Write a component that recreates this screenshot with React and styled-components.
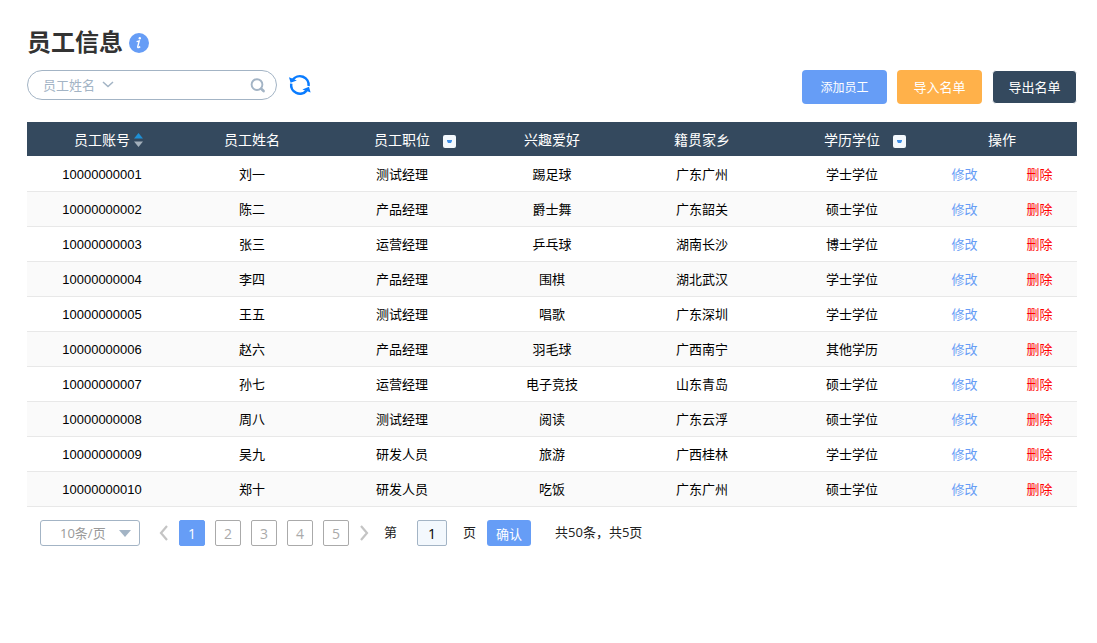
import { useState } from "react";
import styled, { createGlobalStyle } from "styled-components";

const employees = [
  ["10000000001", "刘一", "测试经理", "踢足球", "广东广州", "学士学位"],
  ["10000000002", "陈二", "产品经理", "爵士舞", "广东韶关", "硕士学位"],
  ["10000000003", "张三", "运营经理", "乒乓球", "湖南长沙", "博士学位"],
  ["10000000004", "李四", "产品经理", "围棋", "湖北武汉", "学士学位"],
  ["10000000005", "王五", "测试经理", "唱歌", "广东深圳", "学士学位"],
  ["10000000006", "赵六", "产品经理", "羽毛球", "广西南宁", "其他学历"],
  ["10000000007", "孙七", "运营经理", "电子竞技", "山东青岛", "硕士学位"],
  ["10000000008", "周八", "测试经理", "阅读", "广东云浮", "硕士学位"],
  ["10000000009", "吴九", "研发人员", "旅游", "广西桂林", "学士学位"],
  ["10000000010", "郑十", "研发人员", "吃饭", "广东广州", "硕士学位"],
];

const columns = [
  { label: "员工账号", tool: "sort" },
  { label: "员工姓名" },
  { label: "员工职位", tool: "filter" },
  { label: "兴趣爱好" },
  { label: "籍贯家乡" },
  { label: "学历学位", tool: "filter" },
  { label: "操作" },
];

const pages = [1, 2, 3, 4, 5];

const App = () => {
  const [page, setPage] = useState(1);
  const [target, setTarget] = useState("1");

  return (
    <Container>
      <GlobalStyle />
      <TitleBar>
        <Title>员工信息</Title>
        <InfoIcon />
      </TitleBar>
      <Toolbar>
        <SearchBox>
          <FieldSelect aria-label="搜索字段">
            <option>员工姓名</option>
          </FieldSelect>
          <FieldArrow />
          <SearchInput type="text" aria-label="搜索内容" />
          <IconBtn aria-label="搜索">
            <SearchIcon />
          </IconBtn>
        </SearchBox>
        <IconBtn aria-label="刷新">
          <RefreshIcon />
        </IconBtn>
        <BtnGroup>
          <Btn $color="#669df6" $size={12}>添加员工</Btn>
          <Btn $color="#ffb14a">导入名单</Btn>
          <Btn $color="#34495e" $outlined>导出名单</Btn>
        </BtnGroup>
      </Toolbar>
      <Table>
        <thead>
          <tr>
            {columns.map(({ label, tool }) => (
              <Th key={label}>
                <Heading>
                  <HeadingText>{label}</HeadingText>
                  {tool === "sort" && (
                    <SortBtn aria-label={`${label}排序`}>
                      <SortIcon />
                    </SortBtn>
                  )}
                  {tool === "filter" && (
                    <FilterBtn aria-label={`${label}筛选`}>
                      <FilterIcon />
                    </FilterBtn>
                  )}
                </Heading>
              </Th>
            ))}
          </tr>
        </thead>
        <tbody>
          {employees.map((employee) => (
            <Row key={employee[0]}>
              {employee.map((value, i) => (
                <Td key={i}>{value}</Td>
              ))}
              <Td>
                <Actions>
                  <Action href="#edit" $color="#669df6">修改</Action>
                  <Action href="#delete" $color="#ff0000">删除</Action>
                </Actions>
              </Td>
            </Row>
          ))}
        </tbody>
      </Table>
      <Pagination>
        <SizeBox>
          <SizeSelect aria-label="每页条数">
            <option>10条/页</option>
          </SizeSelect>
          <SizeArrow />
        </SizeBox>
        <Pager>
          <IconBtn aria-label="上一页" onClick={() => setPage(Math.max(1, page - 1))}>
            <Chevron d="M8 2 L2 9 L8 16" />
          </IconBtn>
          {pages.map((n) => (
            <PageBtn key={n} $active={n === page} onClick={() => setPage(n)}>
              {n}
            </PageBtn>
          ))}
          <IconBtn aria-label="下一页" onClick={() => setPage(Math.min(5, page + 1))}>
            <Chevron d="M2 2 L8 9 L2 16" />
          </IconBtn>
        </Pager>
        <Jump>
          <JumpLabel htmlFor="target">第</JumpLabel>
          <PageInput
            id="target"
            type="text"
            value={target}
            onChange={(e) => setTarget(e.target.value)}
          />
          <Caption>页</Caption>
        </Jump>
        <ConfirmBtn onClick={() => setPage(Number(target) || 1)}>确认</ConfirmBtn>
        <Caption>共50条，共5页</Caption>
      </Pagination>
    </Container>
  );
};

const InfoIcon = () => (
  <svg width="20" height="20" viewBox="0 0 20 20" aria-hidden="true">
    <circle cx="10" cy="10" r="10" fill="#669df6" />
    <circle cx="10.8" cy="5.2" r="1.2" fill="#fff" />
    <path
      d="M7.6 8.6 L10.2 8 L8.6 14 Q8.8 15.4 11.2 13.6"
      fill="none"
      stroke="#fff"
      strokeWidth="1.4"
    />
  </svg>
);

const FieldArrow = () => (
  <svg width="12" height="8" viewBox="0 0 12 8" aria-hidden="true">
    <path d="M1 1 L6 5.6 L11 1" fill="none" stroke="#a3b4c5" strokeWidth="1.5" />
  </svg>
);

const SearchIcon = () => (
  <svg width="16" height="16" viewBox="0 0 16 16" aria-hidden="true">
    <circle cx="7" cy="7.6" r="5.4" fill="none" stroke="#a3b4c5" strokeWidth="1.9" />
    <path d="M11.2 11.8 L13.6 14" stroke="#a3b4c5" strokeWidth="2.6" strokeLinecap="round" />
  </svg>
);

const RefreshIcon = () => (
  <svg width="22" height="22" viewBox="0 0 22 22" aria-hidden="true">
    <g fill="none" stroke="#0a7cff" strokeWidth="2.5">
      <path d="M3.6 6 A8.8 8.8 0 0 1 19.6 12" />
      <path d="M2.2 9.6 A8.8 8.8 0 0 0 17.6 16.6" />
    </g>
    <path d="M0 3.2 L2.6 4.2 L7.8 6.6 L1.6 8.8 Z" fill="#0a7cff" />
    <path d="M21.6 18.4 L19 17.4 L13.4 15.4 L20 12.8 Z" fill="#0a7cff" />
  </svg>
);

const SortIcon = () => (
  <svg width="9" height="14" viewBox="0 0 9 14" aria-hidden="true">
    <path d="M4.5 0 L9 5.5 H0 Z" fill="#1e90d6" />
    <path d="M0 8.5 H9 L4.5 14 Z" fill="#a3b0bb" />
  </svg>
);

const FilterIcon = () => (
  <svg width="5" height="3" viewBox="0 0 5 3" aria-hidden="true">
    <path d="M0 0 H5 V1 L4 3 H1 L0 1 Z" fill="#3f90e8" />
  </svg>
);

const SizeArrow = () => (
  <svg width="12" height="7" viewBox="0 0 12 7" aria-hidden="true">
    <path d="M0 0 H12 L6 7 Z" fill="#a3b4c5" />
  </svg>
);

const Chevron = ({ d }) => (
  <svg width="10" height="18" viewBox="0 0 10 18" aria-hidden="true">
    <path d={d} fill="none" stroke="#c4c4c4" strokeWidth="2.2" />
  </svg>
);

const GlobalStyle = createGlobalStyle`
  * {
    box-sizing: border-box;
  }

  body {
    margin: 0;
    background-color: #fff;
    color: #000;
    font-family: "Liberation Sans", "Noto Sans CJK SC", sans-serif;
    font-size: 13px;
  }

  button,
  input,
  select {
    margin: 0;
    padding: 0;
    border: none;
    outline: none;
    background: none;
    font-family: inherit;
    font-size: 13px;
  }

  button {
    cursor: pointer;
  }
`;

const Container = styled.div`
  padding: 24px 20px 24px 27px;
`;

const TitleBar = styled.div`
  display: flex;
  align-items: center;
  gap: 6px;
  height: 38px;
`;

const Title = styled.h1`
  margin: 0;
  color: #333;
  font-size: 24px;
  line-height: 36px;
`;

const Toolbar = styled.div`
  display: flex;
  align-items: flex-start;
  gap: 12px;
  margin: 8px 0 18px;
`;

const SearchBox = styled.div`
  display: flex;
  align-items: center;
  gap: 6px;
  width: 250px;
  height: 30px;
  padding: 0 10px 0 15px;
  border: 1px solid #a3b4c5;
  border-radius: 15px;
`;

const FieldSelect = styled.select`
  appearance: none;
  color: #a3b4c5;
  width: 53px;
  height: 28px;
`;

const SearchInput = styled.input`
  flex: 1;
  min-width: 0;
  height: 28px;
`;

const IconBtn = styled.button`
  display: flex;
  align-items: center;
  justify-content: center;
  min-height: 30px;
`;

const BtnGroup = styled.div`
  display: flex;
  gap: 10px;
  margin-left: auto;
`;

const Btn = styled.button`
  width: 85px;
  height: 34px;
  padding-bottom: 2px;
  border: ${({ $outlined }) => ($outlined ? "1px solid #fff" : "none")};
  border-radius: 4px;
  background-color: ${({ $color }) => $color};
  color: #fff;
  font-size: ${({ $size = 13 }) => $size}px;
`;

const Table = styled.table`
  width: 100%;
  table-layout: fixed;
  border-collapse: separate;
  border-spacing: 0;
`;

const Th = styled.th`
  height: 35px;
  padding: 2px 0 0;
  border-bottom: 1px solid #fff;
  background-color: #34495e;
  background-clip: padding-box;
  color: #fff;
  font-size: 14px;
  font-weight: normal;
`;

const Heading = styled.div`
  display: grid;
  grid-template-columns: 1fr auto 1fr;
  align-items: center;
`;

const HeadingText = styled.span`
  grid-column: 2;
  line-height: 20px;
`;

const SortBtn = styled.button`
  display: flex;
  width: 9px;
  margin-left: 4px;
`;

const FilterBtn = styled.button`
  display: flex;
  align-items: center;
  justify-content: center;
  width: 13px;
  height: 13px;
  margin: 2px 0 0 13px;
  border-radius: 2px;
  background-color: #f3f8fd;
`;

const Row = styled.tr`
  &:nth-child(even) {
    background-color: #fafafa;
  }
`;

const Td = styled.td`
  height: 35px;
  padding: 2px 0 0;
  border-bottom: 1px solid #e8e8e8;
  line-height: 20px;
  text-align: center;
`;

const Actions = styled.div`
  display: grid;
  grid-template-columns: 1fr 1fr;
`;

const Action = styled.a`
  color: ${({ $color }) => $color};
  text-decoration: none;
`;

const Pagination = styled.div`
  display: flex;
  align-items: center;
  margin: 13px;
  color: #222;
  font-family: "Open Sans", "Noto Sans CJK SC", sans-serif;
`;

const SizeBox = styled.div`
  display: flex;
  align-items: center;
  width: 100px;
  height: 26px;
  padding: 0 8px 0 19px;
  border: 1px solid #a3b4c5;
  border-radius: 3px;
`;

const SizeSelect = styled.select`
  flex: 1;
  appearance: none;
  min-width: 0;
  height: 24px;
  color: #999;
`;

const Pager = styled.div`
  display: flex;
  align-items: center;
  gap: 10px;
  height: 26px;
  margin: 0 15px 0 19px;
`;

const PageBtn = styled.button`
  width: 26px;
  height: 26px;
  border: 1px solid ${({ $active }) => ($active ? "#669df6" : "#aaa")};
  border-radius: 2px;
  background-color: ${({ $active }) => ($active ? "#669df6" : "#fff")};
  color: ${({ $active }) => ($active ? "#fff" : "#aaa")};
  font-size: 14px;
`;

const Jump = styled.div`
  display: flex;
  align-items: center;
`;

const Caption = styled.span`
  padding-bottom: 2px;
  line-height: 20px;
`;

const JumpLabel = styled(Caption).attrs({ as: "label" })``;

const PageInput = styled.input`
  width: 30px;
  height: 26px;
  margin: 0 16px 0 20px;
  border: 1px solid #a3b4c5;
  border-radius: 2px;
  background-color: #f3f8fd;
  font-size: 14px;
  text-align: center;
`;

const ConfirmBtn = styled.button`
  width: 44px;
  height: 26px;
  margin: 0 24px 0 11px;
  border-radius: 3px;
  background-color: #669df6;
  color: #fff;
`;

export default App;
